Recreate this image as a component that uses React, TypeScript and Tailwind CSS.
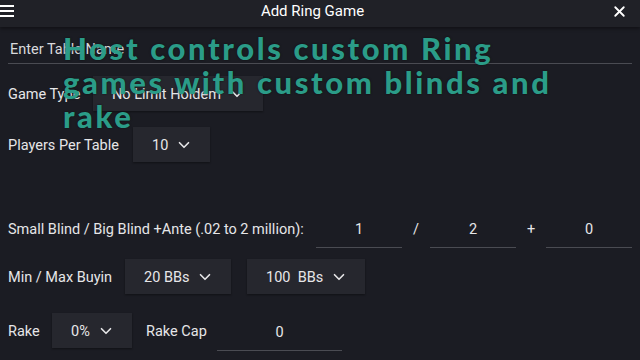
import { ChevronDown, X } from "lucide-react";

function Select({ value, className }: { value: string; className: string }) {
  return (
    <div className={"flex h-[35px] items-center bg-[#26272e] shadow-[0_1px_2px_rgba(0,0,0,0.4)] " + className}>
      <span className="whitespace-pre pt-[3px]">{value}</span>
      <ChevronDown className="ml-auto h-[18px] w-[18px]" strokeWidth={2.2} />
    </div>
  );
}

function Field({ value, className }: { value: string; className: string }) {
  return (
    <div className={"flex h-[36px] items-center justify-center border-b border-[#4a4b52] " + className}>
      {value}
    </div>
  );
}

export default function App() {
  return (
    <div
      className="relative h-[360px] w-[640px] overflow-hidden bg-[#1b1c23] text-[14.5px] text-[#e6e6e8]"
      style={{ fontFamily: "Roboto, 'Liberation Sans', sans-serif" }}
    >
      {/* header */}
      <div className="flex h-[27px] items-center bg-[#202127] pb-[5px] shadow-[0_2px_3px_rgba(0,0,0,0.35)]">
        <div className="flex w-[14px] flex-col gap-[3px]">
          <span className="h-[2px] w-[14px] bg-white" />
          <span className="h-[2px] w-[14px] bg-white" />
          <span className="h-[2px] w-[14px] bg-white" />
        </div>
        <div className="flex-1 text-center text-[15px] text-white">Add Ring Game</div>
        <X className="mr-[12px] h-[17px] w-[17px] text-white" strokeWidth={2.6} />
      </div>

      <div className="flex flex-col pl-[8px] pr-[8px]">
        {/* table name */}
        <div className="mt-[10px] flex h-[27px] items-center border-b border-[#4a4b52] pl-[2px] text-[#d9d9dc]">
          Enter Table Name
        </div>

        {/* game type */}
        <div className="mt-[12px] flex items-center">
          <span className="w-[85px] pt-[3px]">Game Type</span>
          <Select value="No Limit Holdem" className="w-[170px] pl-[19px] pr-[17px]" />
        </div>

        {/* players */}
        <div className="mt-[16px] flex items-center">
          <span className="w-[125px] pt-[3px]">Players Per Table</span>
          <Select value="10" className="w-[77px] pl-[19px] pr-[17px]" />
        </div>

        {/* blinds */}
        <div className="mt-[50px] flex items-center">
          <span className="w-[308px]">Small Blind / Big Blind +Ante (.02 to 2 million):</span>
          <Field value="1" className="w-[86px]" />
          <span className="w-[28px] text-center">/</span>
          <Field value="2" className="w-[86px]" />
          <span className="w-[30px] text-center">+</span>
          <Field value="0" className="w-[86px]" />
        </div>

        {/* buyin */}
        <div className="mt-[11px] flex items-center">
          <span className="w-[117px] pt-[3px]">Min / Max Buyin</span>
          <Select value="20 BBs" className="w-[106px] pl-[19px] pr-[17px]" />
          <Select value="100  BBs" className="ml-[16px] w-[118px] pl-[19px] pr-[17px]" />
        </div>

        {/* rake */}
        <div className="mt-[16px] flex items-center">
          <span className="w-[44px] pt-[3px]">Rake</span>
          <Select value="0%" className="w-[80px] pl-[19px] pr-[17px]" />
          <span className="ml-[14px] w-[71px] pt-[3px]">Rake Cap</span>
          <Field value="0" className="mt-[5px] w-[125px]" />
        </div>
      </div>

      {/* caption overlay */}
      <div
        className="absolute left-[63px] top-[31px] text-[31px] font-black leading-[34px] tracking-[2.6px] text-[#2b9c88]"
        style={{ fontFamily: "Lato, 'Open Sans', sans-serif", textShadow: "0 0 2px rgba(0,0,0,0.6)" }}
      >
        Host controls custom Ring
        <br />
        games with custom blinds and
        <br />
        rake
      </div>
    </div>
  );
}
